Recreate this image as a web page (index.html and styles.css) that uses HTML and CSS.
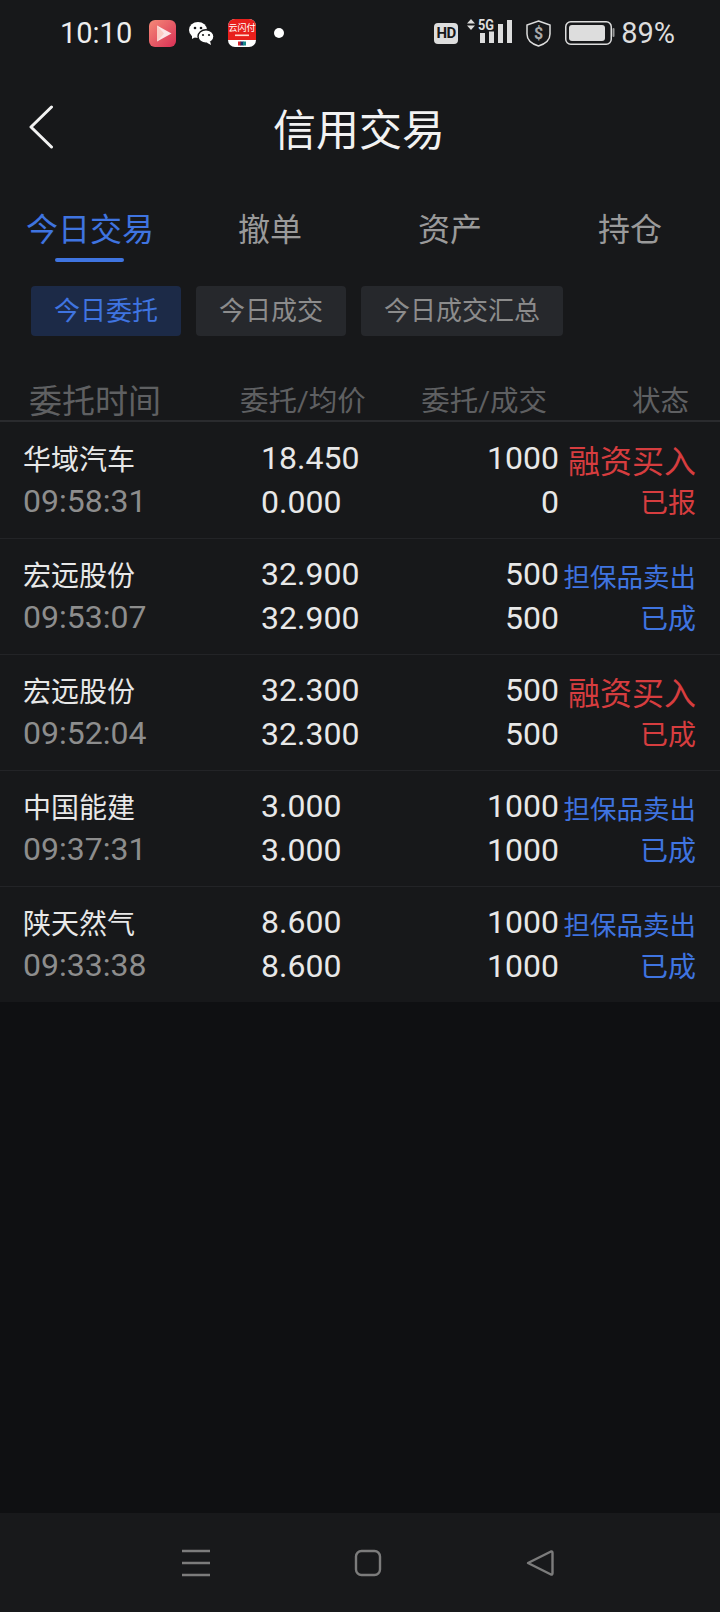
FILE: index.html
```html
<!DOCTYPE html>
<html lang="zh-CN">
<head>
    <meta charset="UTF-8">
    <meta name="viewport" content="width=device-width, initial-scale=1.0">
    <title>信用交易</title>
    <link rel="stylesheet" href="styles.css">
</head>
<body>
    <div class="page">
        <!-- Status bar -->
        <div class="status-bar">
            <div class="status-left">
                <span class="clock">10:10</span>
                <svg class="app-icon play" width="27" height="27" viewBox="0 0 27 27">
                    <defs>
                        <linearGradient id="playBg" x1="0" y1="0" x2="1" y2="1">
                            <stop offset="0" stop-color="#f58a78"/>
                            <stop offset="1" stop-color="#d92f55"/>
                        </linearGradient>
                    </defs>
                    <rect width="27" height="27" rx="6" fill="url(#playBg)"/>
                    <path d="M8 5.5 L22.5 13.5 L8 21.5 Z" fill="#fff" fill-opacity=".85"/>
                    <path d="M8 5.5 L15 13.5 L8 21.5 Z" fill="#f9c3b8" fill-opacity=".7"/>
                </svg>
                <svg class="app-icon wechat" width="25" height="23" viewBox="0 0 25 23">
                    <ellipse cx="9" cy="8" rx="9" ry="8" fill="#fff"/>
                    <path d="M3 13 L3 17 L8 14 Z" fill="#fff"/>
                    <ellipse cx="17" cy="14.5" rx="8" ry="6.8" fill="#fff" stroke="#17181a" stroke-width="1.4"/>
                    <path d="M21 19 L22 23 L17.5 20.5 Z" fill="#fff"/>
                    <circle cx="6" cy="6" r="1.3" fill="#17181a"/>
                    <circle cx="12" cy="6" r="1.3" fill="#17181a"/>
                    <circle cx="14" cy="13" r="1.1" fill="#17181a"/>
                    <circle cx="20" cy="13" r="1.1" fill="#17181a"/>
                </svg>
                <svg class="app-icon unionpay" width="28" height="28" viewBox="0 0 28 28">
                    <rect width="28" height="28" rx="7" fill="#fff"/>
                    <path d="M0 7a7 7 0 0 1 7-7h14a7 7 0 0 1 7 7v14H0Z" fill="#e8201c"/>
                    <text x="14" y="12" text-anchor="middle" class="unionpay-name">云闪付</text>
                    <rect x="7" y="15.5" width="14" height="1.6" fill="#ffd9d0"/>
                    <rect x="10" y="22.5" width="3" height="4" fill="#d8232a"/>
                    <rect x="12.5" y="22.5" width="3" height="4" fill="#17326e"/>
                    <rect x="15" y="22.5" width="3" height="4" fill="#168b8c"/>
                </svg>
                <span class="dot"></span>
            </div>
            <div class="status-right">
                <span class="hd">HD</span>
                <svg class="signal" width="46" height="34" viewBox="0 0 46 34">
                    <path d="M0 7.5 L4 3 L8 7.5 Z M0 9.5 L8 9.5 L4 14 Z" fill="#ddd"/>
                    <text x="11" y="14" class="signal-label" textLength="16" lengthAdjust="spacingAndGlyphs">5G</text>
                    <rect x="13" y="17" width="5" height="10" fill="#ddd"/>
                    <rect x="22" y="15.5" width="5" height="11.5" fill="#ddd"/>
                    <rect x="31" y="8" width="5" height="19" fill="#ddd"/>
                    <rect x="40" y="4" width="5" height="23" fill="#ddd"/>
                </svg>
                <svg class="shield" width="25" height="27" viewBox="0 0 25 27">
                    <path d="M12.5 1 L24 5 V14 C24 20 19 24 12.5 26 C6 24 1 20 1 14 V5 Z" fill="none" stroke="#ddd" stroke-width="1.5"/>
                    <text x="12.5" y="18.5" text-anchor="middle" class="shield-mark">$</text>
                </svg>
                <svg class="battery" width="50" height="24" viewBox="0 0 50 24">
                    <rect x=".75" y=".75" width="45.5" height="22.5" rx="5" fill="none" stroke="#ddd" stroke-width="1.5"/>
                    <rect x="4" y="4" width="36" height="16" rx="3" fill="#ddd"/>
                    <rect x="47.5" y="7" width="2" height="9" rx="1" fill="#999"/>
                </svg>
                <span class="percent">89%</span>
            </div>
        </div>

        <!-- Title -->
        <div class="title-bar">
            <svg class="back" width="26" height="44" viewBox="0 0 26 44">
                <path d="M23.5 2 L3 22 L23.5 42" fill="none" stroke="#f2f2f2" stroke-width="3" stroke-linecap="round" stroke-linejoin="round"/>
            </svg>
            <h1>信用交易</h1>
            <span></span>
        </div>

        <!-- Main tabs -->
        <div class="tabs">
            <div class="tab active">今日交易</div>
            <div class="tab">撤单</div>
            <div class="tab">资产</div>
            <div class="tab">持仓</div>
        </div>

        <div class="chips">
            <div class="chip active">今日委托</div>
            <div class="chip">今日成交</div>
            <div class="chip">今日成交汇总</div>
        </div>

        <div class="table-head">
            <div class="head-time">委托时间</div>
            <div>委托/均价</div>
            <div class="num">委托/成交</div>
            <div class="num">状态</div>
        </div>

        <div class="orders">
            <div class="order">
                <div class="cell-name"><div class="name">华域汽车</div><div class="time">09:58:31</div></div>
                <div class="cell-num"><div>18.450</div><div>0.000</div></div>
                <div class="cell-num num"><div>1000</div><div>0</div></div>
                <div class="cell-state buy"><div class="kind">融资买入</div><div class="state">已报</div></div>
            </div>
            <div class="order">
                <div class="cell-name"><div class="name">宏远股份</div><div class="time">09:53:07</div></div>
                <div class="cell-num"><div>32.900</div><div>32.900</div></div>
                <div class="cell-num num"><div>500</div><div>500</div></div>
                <div class="cell-state sell"><div class="kind">担保品卖出</div><div class="state">已成</div></div>
            </div>
            <div class="order">
                <div class="cell-name"><div class="name">宏远股份</div><div class="time">09:52:04</div></div>
                <div class="cell-num"><div>32.300</div><div>32.300</div></div>
                <div class="cell-num num"><div>500</div><div>500</div></div>
                <div class="cell-state buy"><div class="kind">融资买入</div><div class="state">已成</div></div>
            </div>
            <div class="order">
                <div class="cell-name"><div class="name">中国能建</div><div class="time">09:37:31</div></div>
                <div class="cell-num"><div>3.000</div><div>3.000</div></div>
                <div class="cell-num num"><div>1000</div><div>1000</div></div>
                <div class="cell-state sell"><div class="kind">担保品卖出</div><div class="state">已成</div></div>
            </div>
            <div class="order">
                <div class="cell-name"><div class="name">陕天然气</div><div class="time">09:33:38</div></div>
                <div class="cell-num"><div>8.600</div><div>8.600</div></div>
                <div class="cell-num num"><div>1000</div><div>1000</div></div>
                <div class="cell-state sell"><div class="kind">担保品卖出</div><div class="state">已成</div></div>
            </div>
        </div>

        <div class="spacer"></div>

        <!-- System navigation -->
        <div class="nav-bar">
            <svg width="28" height="28" viewBox="0 0 28 28">
                <path d="M0 2 H28 M0 14 H28 M0 26 H28" stroke="#7c7c7c" stroke-width="2.6" fill="none"/>
            </svg>
            <svg width="28" height="28" viewBox="0 0 28 28">
                <rect x="2" y="2" width="24" height="24" rx="5.5" fill="none" stroke="#7c7c7c" stroke-width="2.4"/>
            </svg>
            <svg width="28" height="28" viewBox="0 0 28 28">
                <path d="M2 14 L25 2.5 Q26.5 2 26.5 4 V24 Q26.5 26 25 25.5 Z" fill="none" stroke="#7c7c7c" stroke-width="2.4" stroke-linejoin="round"/>
            </svg>
        </div>
    </div>
</body>
</html>
```

FILE: styles.css
```css
body {
    margin: 0;
    background-color: #0f1012;
    font-family: Roboto, "Noto Sans CJK SC", sans-serif;
    color: #eee;
}

.page {
    width: 720px;
    height: 1612px;
    display: flex;
    flex-direction: column;
    overflow: hidden;
    background-color: #0f1012;
}

/* status bar */
.status-bar {
    height: 66px;
    flex: none;
    display: flex;
    justify-content: space-between;
    align-items: center;
    background-color: #17181a;
}

.status-left,
.status-right {
    display: flex;
    align-items: center;
}

.status-left {
    padding-left: 60px;
}

.status-right {
    padding-right: 44px;
}

.clock {
    font-size: 29px;
    width: 89px;
    color: #eee;
}

.app-icon {
    display: block;
}

.wechat {
    margin-left: 13px;
}

.unionpay {
    margin-left: 14px;
}

.unionpay-name {
    font-size: 9px;
    font-weight: 400;
    fill: #fff;
    font-family: "Noto Sans CJK SC", sans-serif;
}

.dot {
    width: 10px;
    height: 10px;
    border-radius: 50%;
    background-color: #fff;
    margin-left: 18px;
}

.hd {
    width: 24px;
    height: 21px;
    border-radius: 4px;
    background-color: #ddd;
    color: #17181a;
    font-size: 15px;
    font-weight: 700;
    line-height: 21px;
    text-align: center;
    letter-spacing: -0.5px;
}

.signal {
    margin-left: 9px;
}

.signal-label {
    font-size: 15px;
    font-weight: 700;
    fill: #ddd;
}

.shield {
    margin-left: 13px;
}

.shield-mark {
    font-size: 16px;
    font-weight: 700;
    fill: #aaa;
}

.battery {
    margin-left: 14px;
}

.percent {
    font-size: 29px;
    color: #ddd;
    margin-left: 6px;
    margin-right: 1px;
}

/* title */
.title-bar {
    height: 121px;
    padding: 0 0 9px 28px;
    flex: none;
    display: grid;
    grid-template-columns: 1fr auto 1fr;
    align-items: center;
    background-color: #17181a;
}

.title-bar h1 {
    margin: 0 30px 0 0;
    font-size: 43px;
    font-weight: 400;
    color: #f2f2f2;
}

/* tabs */
.tabs {
    display: grid;
    grid-template-columns: repeat(4, 180px);
    height: 90px;
    flex: none;
    background-color: #17181a;
}

.tab {
    text-align: center;
    font-size: 32px;
    line-height: 68px;
    color: #9a9a9a;
    position: relative;
}

.tab.active {
    color: #3f74e0;
}

.tab.active::after {
    content: "";
    position: absolute;
    left: 55px;
    top: 62px;
    width: 69px;
    height: 4px;
    border-radius: 2px;
    background-color: #3f74e0;
}

.chips {
    display: flex;
    gap: 15px;
    padding: 0 0 0 31px;
    height: 76px;
    flex: none;
    background-color: #17181a;
}

.chip {
    height: 50px;
    line-height: 50px;
    padding: 0 23px;
    border-radius: 4px;
    font-size: 26px;
    color: #8c8c8c;
    background-color: #26282c;
}

.chip.active {
    color: #3f74e0;
    background-color: #1c2a47;
}

/* table */
.table-head {
    height: 60px;
    flex: none;
    display: grid;
    grid-template-columns: 211px 134px 173px 142px;
    padding: 20px 0 0 29px;
    box-sizing: border-box;
    align-items: center;
    font-size: 28.5px;
    line-height: 40px;
    color: #5f6062;
    background-color: #17181a;
    border-bottom: 2px solid #2a2b2e;
}

.head-time {
    font-size: 33px;
}

.num {
    text-align: right;
}

.orders {
    flex: none;
    background-color: #17181a;
}

.order {
    height: 116px;
    box-sizing: border-box;
    display: grid;
    grid-template-columns: 238px 121px 177px 137px;
    padding: 16px 0 0 23px;
    border-top: 1px solid #232427;
}

.order:first-child {
    border-top-color: transparent;
}

.cell-num {
    font-size: 32px;
    line-height: 43.5px;
    margin-top: -2px;
    color: #e8e8e8;
}

.name {
    font-size: 28px;
    line-height: 44px;
    color: #e8e8e8;
}

.time {
    font-size: 32px;
    line-height: 36px;
    color: #8d8d8d;
}

.cell-state {
    text-align: right;
}

.buy {
    color: #d63d3f;
}

.sell {
    color: #3f74e0;
}

.kind {
    line-height: 46px;
    height: 43px;
    white-space: nowrap;
    font-size: 26.5px;
}

.buy .kind {
    font-size: 32px;
}

.state {
    font-size: 28px;
    line-height: 44px;
}

.spacer {
    flex: 1;
}

.nav-bar {
    height: 99px;
    flex: none;
    display: flex;
    align-items: center;
    padding-left: 182px;
    gap: 144px;
    background-color: #18191b;
}
```
